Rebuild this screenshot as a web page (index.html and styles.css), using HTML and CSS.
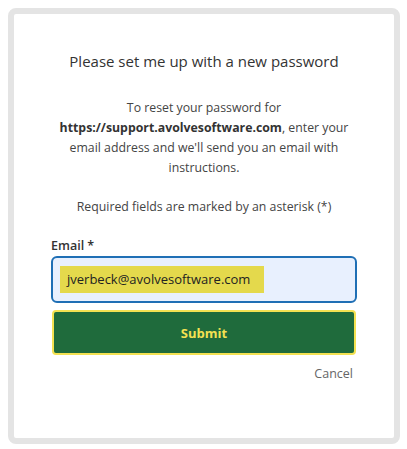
FILE: index.html
```
<!DOCTYPE html>
<html>
<head>
<meta charset="utf-8">
<link rel="stylesheet" href="styles.css">
</head>
<body>
<div class="card">
  <h1 class="title">Please set me up with a new password</h1>
  <p class="intro">To reset your password for <strong>https://support.avolvesoftware.com</strong>, enter your email address and we'll send you an email with instructions.</p>
  <p class="required">Required fields are marked by an asterisk (*)</p>
  <form class="form">
    <label class="label" for="email">Email *</label>
    <div class="input">
      <span class="value">jverbeck@avolvesoftware.com</span>
    </div>
    <button type="button" class="submit">Submit</button>
    <div class="cancel-row"><a class="cancel" href="#">Cancel</a></div>
  </form>
</div>
</body>
</html>
```
FILE: styles.css
```
html, body {
  margin: 0;
  padding: 0;
  background: #fff;
}
body {
  padding: 8px 7px 5px 8px;
  font-family: "Open Sans", "Noto Sans", sans-serif;
  color: #333;
}
.card {
  box-sizing: border-box;
  width: 392px;
  height: 436px;
  border: 6px solid #e4e4e4;
  border-radius: 8px;
  padding: 0 37px;
  display: flex;
  flex-direction: column;
}
.title {
  margin: 37px 0 0;
  font-size: 15px;
  font-weight: 400;
  text-align: center;
  line-height: 20px;
  color: #333;
}
.intro {
  margin: 27px 0 0;
  font-size: 12.3px;
  line-height: 20px;
  text-align: center;
  color: #444;
}
.intro strong {
  color: #333;
}
.required {
  margin: 19px 0 0;
  font-size: 12.3px;
  line-height: 20px;
  text-align: center;
  color: #444;
}
.form {
  display: flex;
  flex-direction: column;
  margin-top: 20px;
}
.label {
  font-size: 12.5px;
  font-weight: 600;
  line-height: 18px;
  color: #333;
}
.input {
  box-sizing: border-box;
  margin-top: 1px;
  height: 47px;
  border: 2px solid #1f6fb5;
  border-radius: 6px;
  background: #e8f0fe;
  display: flex;
  align-items: center;
  padding-left: 7px;
}
.value {
  background: #e4d94c;
  font-size: 13px;
  line-height: 27px;
  padding: 0 14px 0 7px;
  color: #222;
}
.submit {
  box-sizing: border-box;
  margin: 7px 1px 0;
  height: 45px;
  border: 2px solid #f3e152;
  border-radius: 4px;
  background: #1f6b3c;
  color: #f3e152;
  font-family: "Open Sans", "Noto Sans", sans-serif;
  font-size: 13px;
  font-weight: 700;
}
.cancel-row {
  display: flex;
  justify-content: flex-end;
  margin-top: 10px;
}
.cancel {
  font-size: 12.5px;
  line-height: 18px;
  color: #666;
  text-decoration: none;
  margin-right: 4px;
}
```
